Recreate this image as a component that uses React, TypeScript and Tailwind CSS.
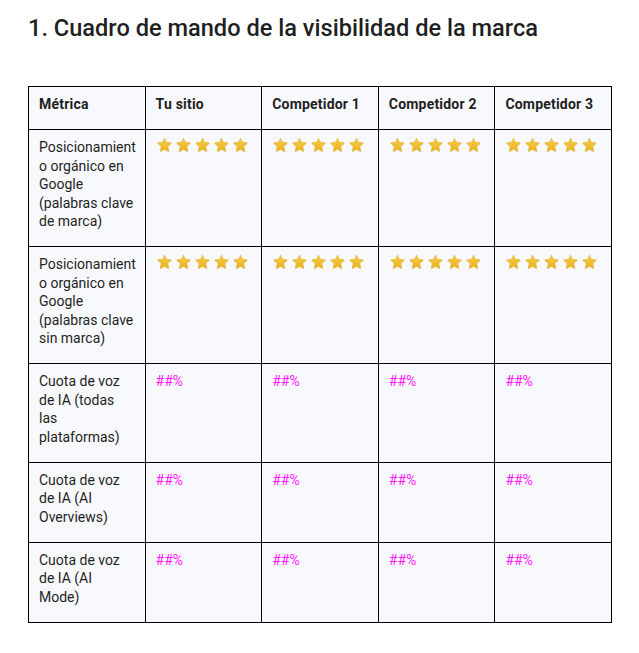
import React from "react";

const Star = () => (
  <svg width="15" height="15" viewBox="0 0 24 24" className="shrink-0">
    <defs>
      <linearGradient id="starGrad" x1="0" y1="0" x2="0" y2="1">
        <stop offset="0%" stopColor="#f7d046" />
        <stop offset="100%" stopColor="#e9b124" />
      </linearGradient>
    </defs>
    <path
      d="M12 1.8l3.1 6.6 7.1.8c.6.1.8.8.4 1.2l-5.3 4.9 1.5 7.1c.1.6-.5 1-1 .7L12 19.6l-5.8 3.5c-.5.3-1.1-.1-1-.7l1.5-7.1-5.3-4.9c-.4-.4-.2-1.1.4-1.2l7.1-.8L12 1.8z"
      fill="url(#starGrad)"
      stroke="#dca41c"
      strokeWidth="0.8"
      strokeLinejoin="round"
    />
  </svg>
);

const Stars = () => (
  <div className="flex gap-[4px] pl-[1px] -mt-[1px]">
    {[0, 1, 2, 3, 4].map((i) => (
      <Star key={i} />
    ))}
  </div>
);

const Pct = () => <span className="text-[#ff1aff]">##%</span>;

const headers = ["Métrica", "Tu sitio", "Competidor 1", "Competidor 2", "Competidor 3"];

// label lines follow the wrapping seen in the original cell width
const rows: { lines: string[]; kind: "stars" | "pct" }[] = [
  { lines: ["Posicionamient", "o orgánico en", "Google", "(palabras clave", "de marca)"], kind: "stars" },
  { lines: ["Posicionamient", "o orgánico en", "Google", "(palabras clave", "sin marca)"], kind: "stars" },
  { lines: ["Cuota de voz", "de IA (todas", "las", "plataformas)"], kind: "pct" },
  { lines: ["Cuota de voz", "de IA (AI", "Overviews)"], kind: "pct" },
  { lines: ["Cuota de voz", "de IA (AI", "Mode)"], kind: "pct" },
];

const cell =
  "border border-black bg-[#f8f9fd] align-top text-left pl-[10px] pr-[6px] pt-[8px] pb-[15.5px]";

export default function App() {
  return (
    <div
      className="min-h-screen bg-white text-[#1f1f1f] px-[28px] pt-[13px]"
      style={{ fontFamily: "Roboto, 'Open Sans', Arial, sans-serif" }}
    >
      <h1 className="text-[23.6px] leading-[30px] font-medium">
        1. Cuadro de mando de la visibilidad de la marca
      </h1>
      <table className="mt-[43px] w-[584px] table-fixed border-collapse text-[14px] leading-[18.5px]">
        <thead>
          <tr>
            {headers.map((h) => (
              <th key={h} className={`${cell} font-bold tracking-[0.2px]`}>
                {h}
              </th>
            ))}
          </tr>
        </thead>
        <tbody>
          {rows.map((r, ri) => (
            <tr key={ri}>
              <td className={cell}>
                {r.lines.map((l, li) => (
                  <span key={li} className="block whitespace-nowrap">
                    {l}
                  </span>
                ))}
              </td>
              {[0, 1, 2, 3].map((i) => (
                <td key={i} className={cell}>
                  {r.kind === "stars" ? <Stars /> : <Pct />}
                </td>
              ))}
            </tr>
          ))}
        </tbody>
      </table>
    </div>
  );
}
